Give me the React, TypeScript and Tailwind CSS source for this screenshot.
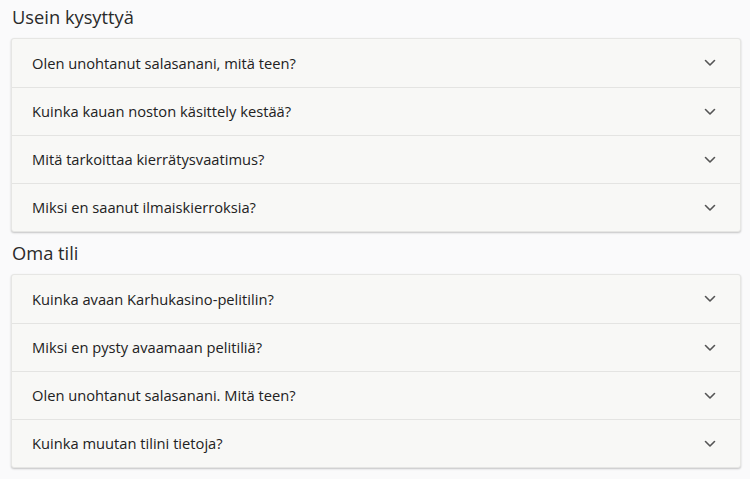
import React from 'react';

const sections = [
  {
    title: 'Usein kysyttyä',
    items: [
      'Olen unohtanut salasanani, mitä teen?',
      'Kuinka kauan noston käsittely kestää?',
      'Mitä tarkoittaa kierrätysvaatimus?',
      'Miksi en saanut ilmaiskierroksia?',
    ],
  },
  {
    title: 'Oma tili',
    items: [
      'Kuinka avaan Karhukasino-pelitilin?',
      'Miksi en pysty avaamaan pelitiliä?',
      'Olen unohtanut salasanani. Mitä teen?',
      'Kuinka muutan tilini tietoja?',
    ],
  },
];

const Chevron: React.FC = () => (
  <svg width="12" height="8" viewBox="0 0 12 8" fill="none" className="text-[#555]">
    <path d="M1.5 1.5L6 6l4.5-4.5" stroke="currentColor" strokeWidth="1.6" strokeLinecap="round" strokeLinejoin="round" />
  </svg>
);

const App: React.FC = () => {
  return (
    <div className="min-h-[479px] bg-[#fafafb] pl-[11px] pr-[9px] pt-[6px] text-[#222] font-['Open_Sans',sans-serif]">
      {sections.map(section => (
        <div key={section.title}>
          <h2 className="h-[32px] pl-[1px] text-[18.3px] leading-[22px] text-[#2a2a2a]">{section.title}</h2>
          <div className="mb-[10px] rounded-[3px] border border-[#e6e6e4] bg-[#f8f8f6] shadow-[0_1px_2px_rgba(0,0,0,0.22)]">
            {section.items.map((item, i) => (
              <button
                key={item}
                className={`flex h-[48px] w-full items-center justify-between pl-[20px] pr-[24px] text-left text-[14.7px] text-[#222] ${i > 0 ? 'border-t border-[#e4e4e2]' : ''}`}
              >
                <span>{item}</span>
                <Chevron />
              </button>
            ))}
          </div>
        </div>
      ))}
    </div>
  );
};

export default App;
